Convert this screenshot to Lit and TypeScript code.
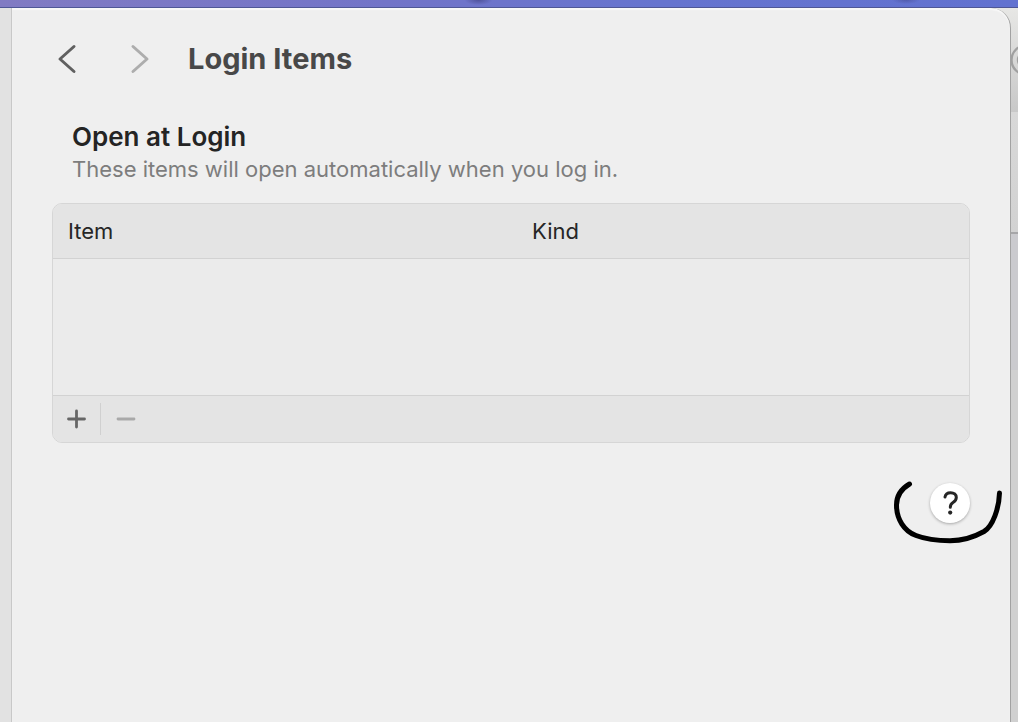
import { LitElement, html, css } from "lit";
import { customElement } from "lit/decorators.js";

@customElement("login-items-table")
class LoginItemsTable extends LitElement {
  static styles = css`
    :host {
      display: block;
      border: 1px solid #d6d6d6;
      border-radius: 10px;
      overflow: hidden;
      background: #ebebeb;
      color: #262626;
    }
    .items {
      width: 100%;
      border-collapse: collapse;
      table-layout: fixed;
    }
    .head {
      height: 54px;
      box-sizing: border-box;
      padding: 0 15px;
      background: #e4e4e4;
      border-bottom: 1px solid #d2d2d2;
      font-size: 22px;
      font-weight: 400;
      text-align: left;
    }
    .item-col {
      width: 464px;
    }
    .empty {
      height: 136px;
      padding: 0;
    }
    .tools {
      display: flex;
      align-items: center;
      height: 46px;
      background: #e4e4e4;
      border-top: 1px solid #d2d2d2;
    }
    .tool {
      display: grid;
      place-items: center;
      width: 47px;
      height: 46px;
      padding: 0;
      border: 0;
      background: none;
      color: #666;
    }
    .tool:disabled {
      color: #a9a9a9;
    }
    .rule {
      width: 1px;
      height: 32px;
      background: #d0d0d0;
    }
    .rule + .tool {
      width: 50px;
    }
    .glyph {
      width: 20px;
      height: 20px;
      fill: none;
      stroke: currentColor;
      stroke-width: 2.8;
      stroke-linecap: round;
    }
  `;

  render() {
    return html`
      <table class="items">
        <colgroup>
          <col class="item-col" />
          <col />
        </colgroup>
        <thead>
          <tr>
            <th class="head" scope="col">Item</th>
            <th class="head" scope="col">Kind</th>
          </tr>
        </thead>
        <tbody>
          <tr><td class="empty" colspan="2"></td></tr>
        </tbody>
      </table>
      <div class="tools">
        <button class="tool" aria-label="Add item">
          <svg class="glyph" viewBox="0 0 20 20"><path d="M1.500 10H17.500M9.500 2V18" /></svg>
        </button>
        <span class="rule"></span>
        <button class="tool" aria-label="Remove item" disabled>
          <svg class="glyph" viewBox="0 0 20 20"><path d="M2 10H18" /></svg>
        </button>
      </div>
    `;
  }
}

@customElement("app-root")
class AppRoot extends LitElement {
  static styles = css`
    :host {
      display: flex;
      flex-direction: column;
      min-height: 100vh;
      overflow: hidden;
      font-family: Inter, "Liberation Sans", sans-serif;
    }
    .desktop {
      height: 7px;
      border-bottom: 1px solid #4f5796;
      background:
        radial-gradient(ellipse 14px 5px at 47% 0, rgba(50, 50, 110, 0.5), transparent),
        radial-gradient(ellipse 14px 4px at 89% 0, rgba(50, 50, 110, 0.35), transparent),
        linear-gradient(90deg, #817bc3 0%, #7274c8 38%, #6674cf 65%, #6272d0 100%);
    }
    .behind {
      flex: 1;
      display: flex;
      padding: 0 7px 0 11px;
      background:
        linear-gradient(180deg, #e7e7e5 0, #c8c8c8 104px, #d8d8d8 104px, #d2d2d2 224px, #a6a6a8 224px, #a6a6a8 226px, #cacace 226px, #cacace 362px, #d0d0d0 362px)
          right / 40px 100% no-repeat,
        #e2e2e2;
      position: relative;
    }
    .search {
      position: absolute;
      top: 36px;
      right: -24px;
      width: 32px;
      height: 32px;
      fill: none;
      stroke: #a0a0a0;
      stroke-width: 2.4;
    }
    .window {
      flex: 1;
      position: relative;
      box-sizing: border-box;
      padding: 26px 40px 0 40px;
      border-left: 1px solid #c8c8c8;
      border-right: 1px solid #a2a2a2;
      border-top-right-radius: 20px;
      background: #efefef;
      box-shadow: inset 0 2px 1px #f8f8f8;
    }
    .bar {
      display: flex;
      align-items: center;
      height: 50px;
      color: #484848;
    }
    .nav {
      display: grid;
      place-items: center;
      width: 30px;
      height: 40px;
      margin-right: 42px;
      padding: 0;
      border: 0;
      background: none;
      color: #606060;
    }
    .nav:disabled {
      color: #adadad;
    }
    .nav + .nav {
      width: 32px;
      margin-right: 32px;
    }
    .chevron {
      width: 20px;
      height: 30px;
      fill: none;
      stroke: currentColor;
      stroke-width: 3;
      stroke-linecap: round;
      stroke-linejoin: round;
    }
    .title {
      margin: 0;
      font-size: 29px;
      line-height: 40px;
      font-weight: 700;
    }
    .intro {
      padding: 36px 20px 18px;
    }
    .heading {
      margin: 0;
      font-size: 26px;
      line-height: 34px;
      font-weight: 600;
      color: #242424;
    }
    .note {
      margin: 0;
      font-size: 22px;
      line-height: 31px;
      color: #7d7d7d;
    }
    .footer {
      display: flex;
      justify-content: flex-end;
      padding-top: 40px;
    }
    .help {
      position: relative;
      width: 40px;
      height: 40px;
      padding: 0;
      border: 0;
      border-radius: 50%;
      background: #fff;
      box-shadow: 0 1px 3px rgba(0, 0, 0, 0.3);
      color: #262626;
      display: grid;
      place-items: center;
    }
    .question {
      width: 40px;
      height: 40px;
      fill: none;
      stroke: currentColor;
      stroke-width: 3;
      stroke-linecap: round;
      stroke-linejoin: round;
    }
    .dot {
      fill: currentColor;
      stroke: none;
    }
    .scribble {
      position: absolute;
      left: -40px;
      top: -8px;
      width: 116px;
      height: 72px;
      fill: none;
      stroke: #000;
      stroke-width: 5;
      stroke-linecap: round;
      stroke-linejoin: round;
      pointer-events: none;
    }
  `;

  render() {
    return html`
      <div class="desktop"></div>
      <div class="behind">
        <svg class="search" viewBox="0 0 32 32" aria-hidden="true">
          <circle cx="16" cy="16" r="14.5" />
          <circle cx="16" cy="16" r="8" />
        </svg>
        <main class="window">
          <header class="bar">
            <button class="nav" aria-label="Back">
              <svg class="chevron" viewBox="0 0 20 30"><path d="M17 2.500L3 15L17 27.500" /></svg>
            </button>
            <button class="nav" aria-label="Forward" disabled>
              <svg class="chevron" viewBox="0 0 20 30"><path d="M3 2.500L17 15L3 27.500" /></svg>
            </button>
            <h1 class="title">Login Items</h1>
          </header>
          <section class="intro">
            <h2 class="heading">Open at Login</h2>
            <p class="note">These items will open automatically when you log in.</p>
          </section>
          <login-items-table></login-items-table>
          <div class="footer">
            <button class="help" aria-label="Help">
              <svg class="question" viewBox="0 0 40 40">
                <path d="M15 14C15.400 11.300 17.600 9.700 20.600 9.700C24 9.700 26.300 11.600 26.300 14.500C26.300 16.800 25.100 18.200 23 19.500C21 20.800 20.300 21.900 20.300 24.200" />
                <circle class="dot" cx="20.2" cy="29.6" r="2.1" />
              </svg>
              <svg class="scribble" viewBox="890 475 116 72" aria-hidden="true">
                <path d="M909.500 484C901 489 896.500 497 896.500 505C896.500 519 904 531 916 535.500C925 539 938 540.700 950 540.700C964 540.700 976 536 984 531.500C993 526 999 508 999.500 493" />
              </svg>
            </button>
          </div>
        </main>
      </div>
    `;
  }
}
